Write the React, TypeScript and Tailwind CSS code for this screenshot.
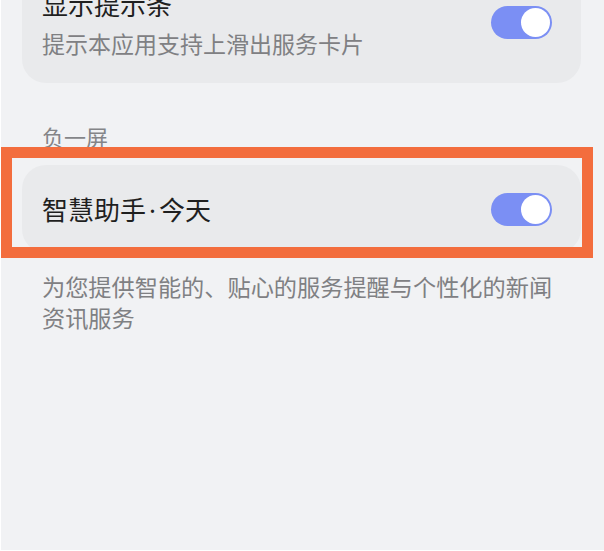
import React from "react";

const font = { fontFamily: '"Noto Sans CJK SC", "Noto Sans", sans-serif' };

function Toggle() {
  return (
    <div className="flex h-[33px] w-[61px] shrink-0 items-center justify-end rounded-full bg-[#7b8ff4] pr-[2px]">
      <div className="size-[29px] rounded-full bg-white" />
    </div>
  );
}

export default function App() {
  return (
    <div className="relative h-[551px] w-[604px] overflow-hidden bg-white" style={font}>
      <div className="ml-[1px] h-[550px] w-[603px] overflow-hidden bg-[#f1f2f4]">
        {/* 显示提示条 card, scrolled partly off the top */}
        <div className="-mt-[40px] ml-[21px] flex w-[559px] items-center justify-between rounded-[24px] bg-[#e9eaec] pb-[24px] pl-[20px] pr-[29px] pt-[26px]">
          <div className="flex flex-col">
            <span className="text-[26px] leading-[36px] text-[#1f1f1f]">显示提示条</span>
            <span className="mt-[5px] text-[23px] leading-[32px] text-[#7f8083]">
              提示本应用支持上滑出服务卡片
            </span>
          </div>
          <Toggle />
        </div>

        <div className="ml-[41px] mt-[38px] text-[22px] leading-[30px] text-[#848588]">负一屏</div>

        <div className="ml-[21px] mt-[14px] flex h-[88px] w-[559px] items-center justify-between rounded-[24px] bg-[#e9eaec] pl-[20px] pr-[29px]">
          <span className="text-[26px] leading-[36px] text-[#1f1f1f]">
            智慧助手
            <span className="mx-[3px]" style={{ fontFamily: '"Noto Sans", sans-serif' }}>
              ·
            </span>
            今天
          </span>
          <Toggle />
        </div>

        <p className="ml-[41px] mt-[18px] w-[524px] text-[23.2px] leading-[31px] text-[#7f8083]">
          为您提供智能的、贴心的服务提醒与个性化的新闻资讯服务
        </p>
      </div>

      {/* annotation highlight */}
      <div className="absolute left-[1px] top-[147px] h-[111px] w-[592px] border-[11px] border-[#f36d3d]" />
    </div>
  );
}
